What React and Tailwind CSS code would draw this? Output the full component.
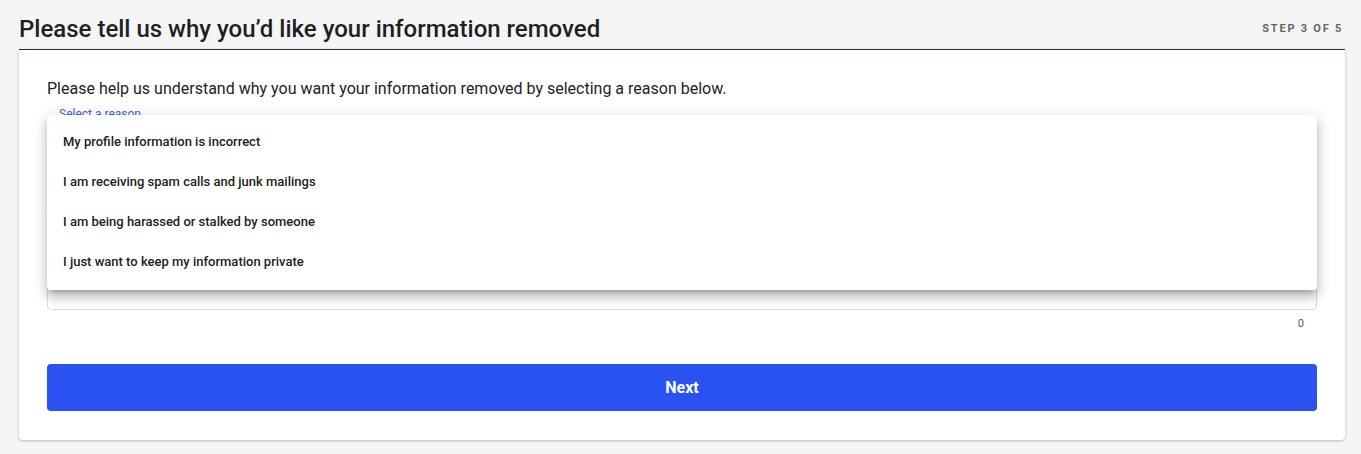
const reasons = [
  "My profile information is incorrect",
  "I am receiving spam calls and junk mailings",
  "I am being harassed or stalked by someone",
  "I just want to keep my information private",
];

export default function App() {
  return (
    <div
      className="min-h-screen bg-[#f5f5f5] pl-[19px] pr-[16px] pt-[9px] pb-[14px]"
      style={{ fontFamily: "Roboto, 'Liberation Sans', sans-serif" }}
    >
      <div className="flex h-[40px] items-center justify-between">
        <h1 className="text-[24px] font-medium leading-none text-[#1f1f1f]">
          Please tell us why you’d like your information removed
        </h1>
        <span className="pr-[2px] text-[11px] font-bold tracking-[0.16em] text-[#666]">
          STEP 3 OF 5
        </span>
      </div>

      <div className="rounded-b-[4px] border-t border-[#1c2f5e] bg-white px-[28px] pt-[27px] pb-[29px] shadow-[0_1px_3px_rgba(0,0,0,0.25)]">
        <p className="text-[16px] leading-[24px] text-[#222]">
          Please help us understand why you want your information removed by selecting a reason below.
        </p>

        {/* select + textarea, with the open menu over them */}
        <div className="relative flex h-[209px] flex-col pt-[6px]">
          <span className="pl-[12px] text-[12px] leading-[14px] text-[#3d5fd9]">
            Select a reason
          </span>
          <div className="h-[52px] rounded-[4px] border border-[#2a52f3]"></div>
          <div className="mt-[8px] h-[130px] rounded-[4px] border border-[#dcdcdc]"></div>

          <ul className="absolute left-0 right-0 top-[14px] rounded-[4px] bg-white pt-[7px] pb-[8px] shadow-[0_5px_5px_-3px_rgba(0,0,0,0.2),0_8px_10px_1px_rgba(0,0,0,0.14),0_3px_14px_2px_rgba(0,0,0,0.12)]">
            {reasons.map((r) => (
              <li
                key={r}
                className="flex h-[40px] items-center px-[16px] text-[13px] font-medium text-[#222]"
              >
                {r}
              </li>
            ))}
          </ul>
        </div>

        <div className="flex justify-end pr-[13px] pt-[6px] text-[11px] leading-[16px] text-[#555]">
          0
        </div>

        <button className="mt-[32px] flex h-[47px] w-full items-center justify-center rounded-[4px] bg-[#2a52f3] text-[16px] font-bold text-white">
          Next
        </button>
      </div>
    </div>
  );
}
